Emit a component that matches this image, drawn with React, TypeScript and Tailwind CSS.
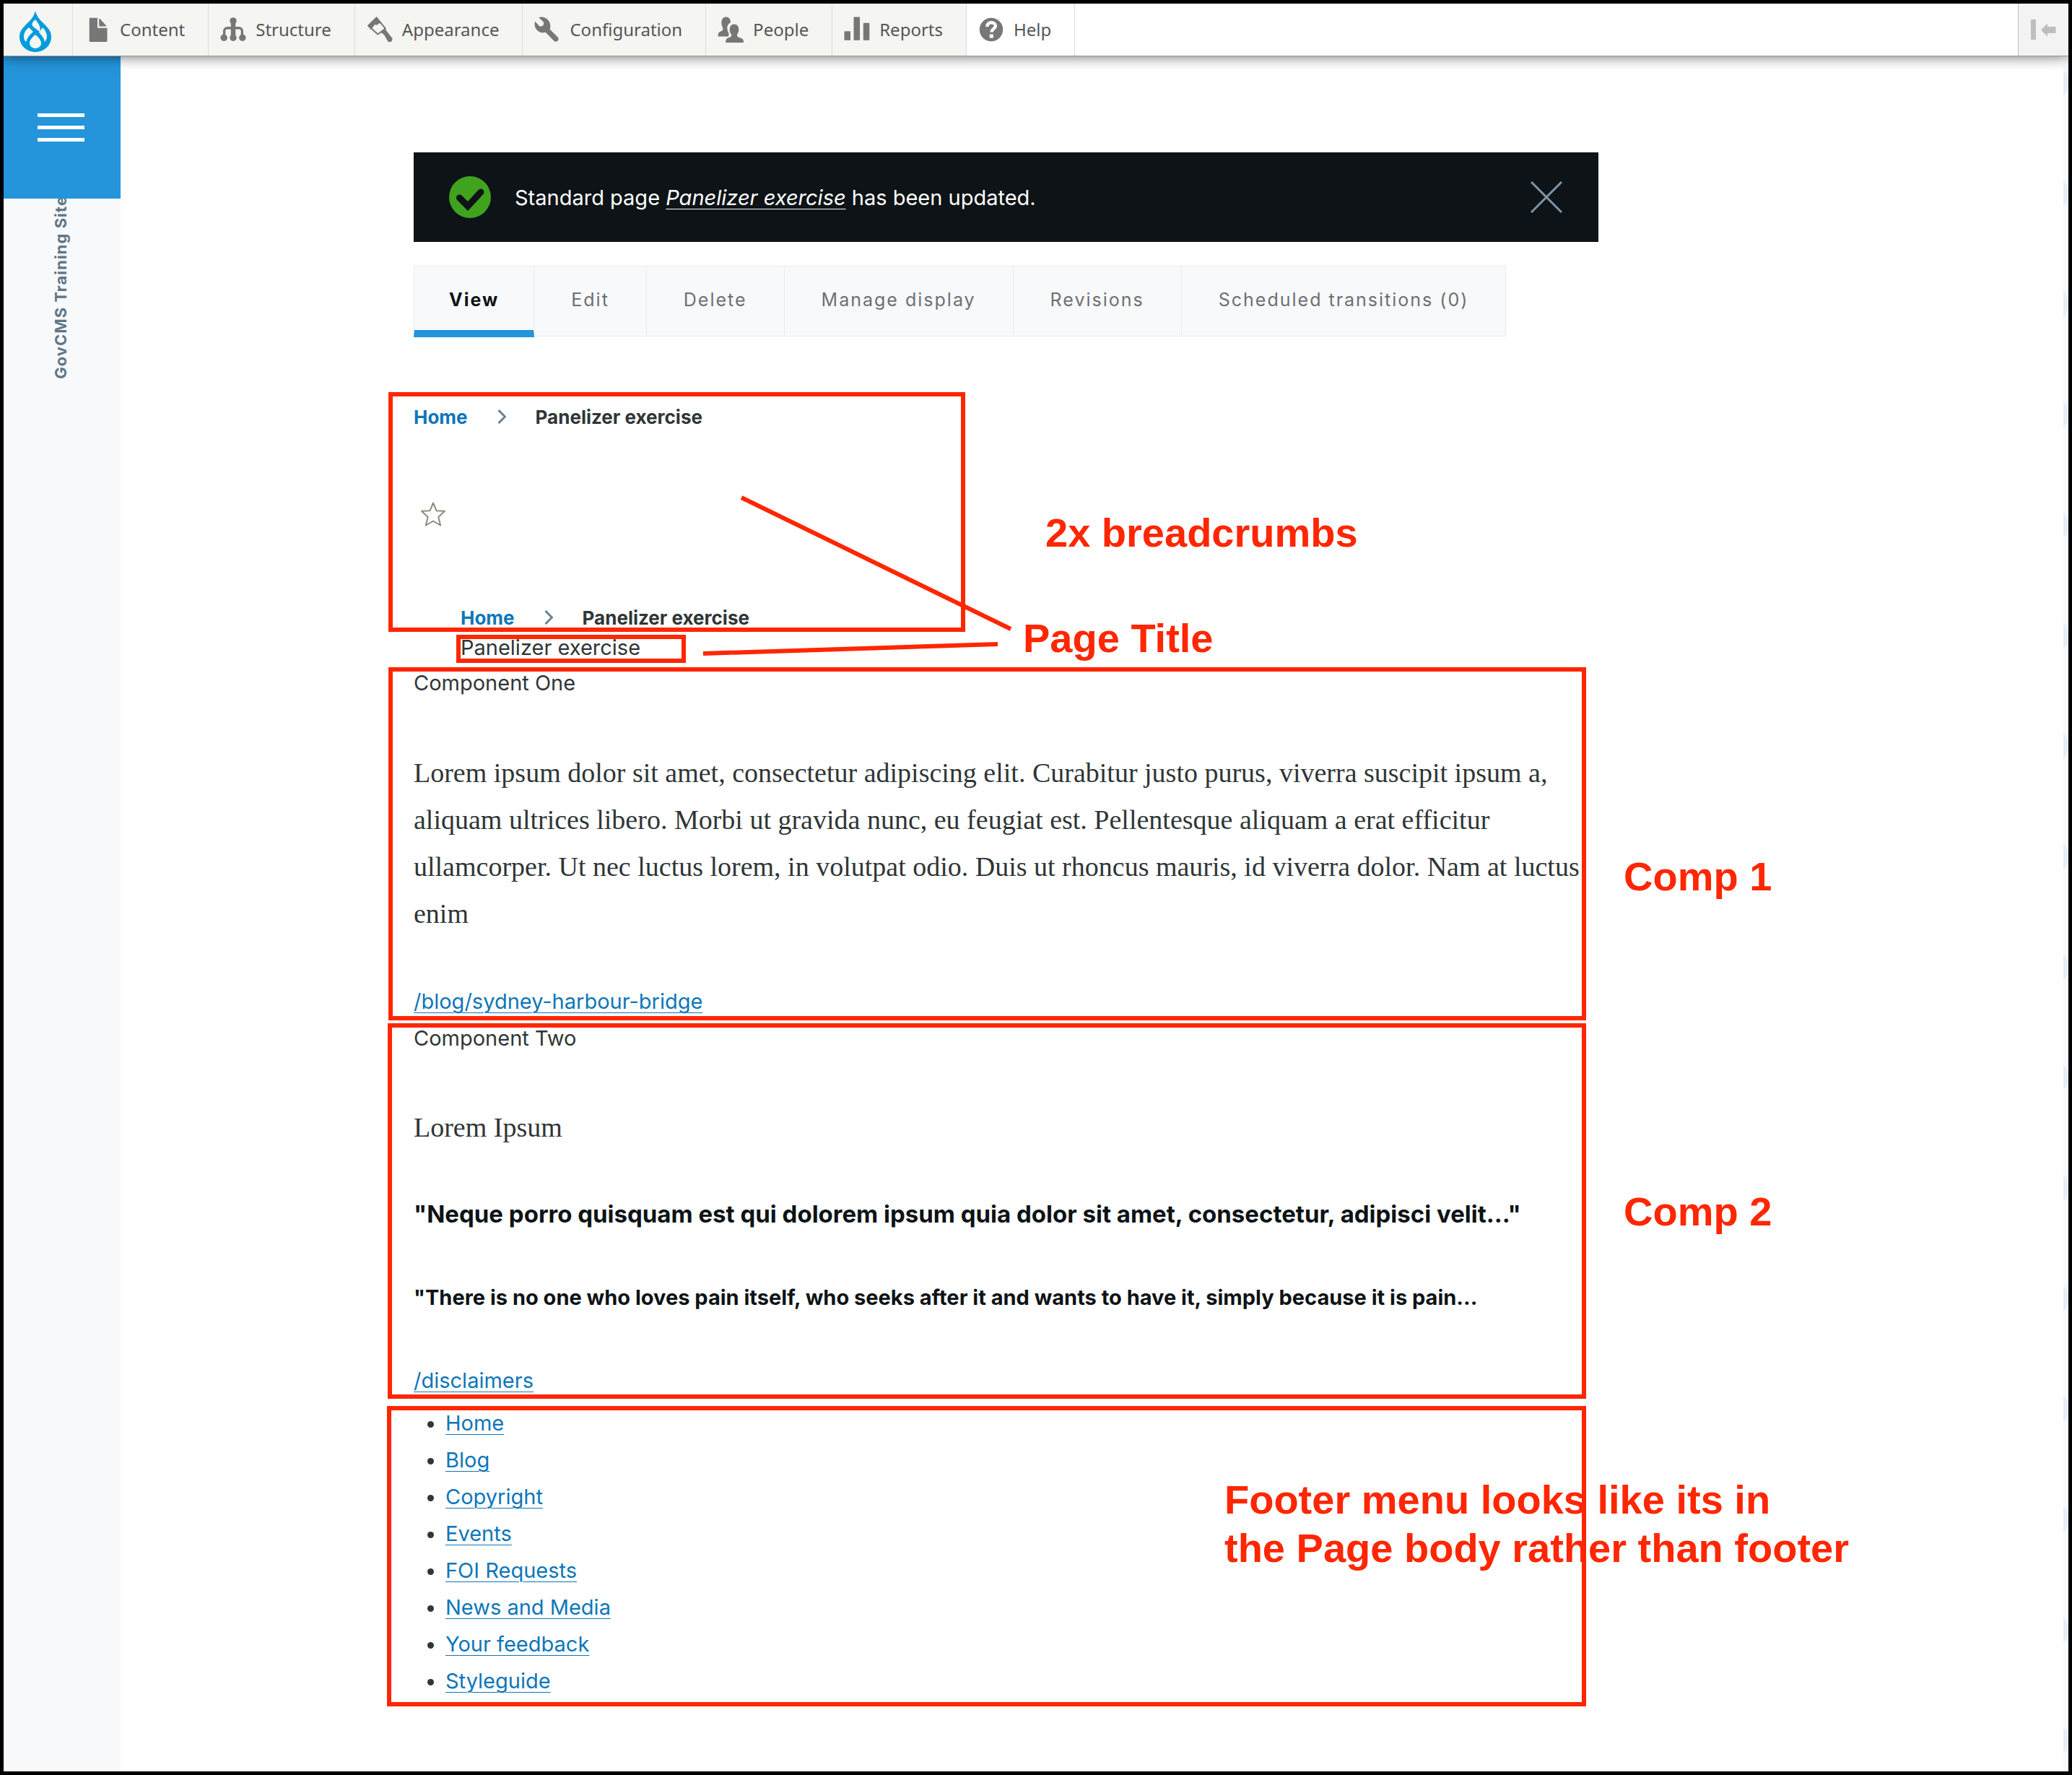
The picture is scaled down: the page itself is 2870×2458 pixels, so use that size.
import React from "react";

const toolbarItems = [
  { label: "Content", icon: "content" },
  { label: "Structure", icon: "structure" },
  { label: "Appearance", icon: "appearance" },
  { label: "Configuration", icon: "configuration" },
  { label: "People", icon: "people" },
  { label: "Reports", icon: "reports" },
  { label: "Help", icon: "help" },
];

const tabs = ["View", "Edit", "Delete", "Manage display", "Revisions", "Scheduled transitions (0)"];

const footerLinks = ["Home", "Blog", "Copyright", "Events", "FOI Requests", "News and Media", "Your feedback", "Styleguide"];

const linkClass = "text-[#0e76b8] underline decoration-1 underline-offset-[5px]";

function ToolbarIcon({ name }: { name: string }) {
  return (
    <svg viewBox="0 0 16 16" className="size-9 shrink-0 fill-[#777777]" aria-hidden="true">
      {name === "content" && (
        <>
          <path d="M13.3 6H9V1.3c0-.2.2-.3.4-.1L13.4 5.500c.2.200.100.500-.1.500z" />
          <path d="M8 1v6h6v8c0 .300-.2.500-.5.500h-10c-.3 0-.5-.2-.5-.5V1.300C3 1 3.200.800 3.500.800H8z" />
        </>
      )}
      {name === "structure" && (
        <>
          <ellipse cx="8" cy="2.600" rx="2.100" ry="2.100" />
          <path d="M7.300 4h1.400v8H7.300zM2.500 12V9c0-1.200.8-2 2-2h7c1.200 0 2 .8 2 2v3" fill="none" stroke="#777777" strokeWidth="1.500" />
          <circle cx="2.300" cy="13" r="2.100" />
          <circle cx="8" cy="13" r="2.100" />
          <circle cx="13.700" cy="13" r="2.100" />
        </>
      )}
      {name === "appearance" && (
        <>
          <path d="M.9 5.600L6 .6l5.500 6.800-4.700 3.500z" fill="none" stroke="#777777" strokeWidth=".9" strokeLinejoin="round" />
          <path d="M.5 5.500L6 .1l4.200 5.300-2.300-1.400-1.700 1.200-1.200-.3L2.600 8z" />
          <path d="M8.700 9.700l2.600-2 4.200 5.300c1.100 1.600-1.200 3.600-2.500 2.200l-2.300-4z" />
        </>
      )}
      {name === "configuration" && (
        <path d="M14.400 12.600L9.600 7.800c.7-2 .3-4.300-1.300-5.900C6.700.300 4.600-.100 2.800.500l3.100 3.100-.4 2-2 .5L.5 3C-.1 4.800.300 6.900 1.800 8.400c1.400 1.400 3.400 1.800 5.200 1.300l5.100 5.200c1.500 1.500 3.900-.7 2.300-2.300z" />
      )}
      {name === "people" && (
        <>
          <path d="M6.700 12.200H.300c0-2 .3-2.500 1.300-3 1.400-.6 1.700-1 1.700-1.700 0-.8-.9-1.600-.9-3.800C2.400 1.300 3.600.200 5.200.200S8 1.300 8 3.700C6.300 4.600 5.700 6 6 7.900c.1 1.200.8 2 .9 2.700z" />
          <path d="M5 16c0-1.700.2-2.400 1.400-2.900 1.700-.6 2.100-.9 2.100-1.700S7.400 10.100 7.400 8c0-2.100 1.200-3.300 2.800-3.300S13 5.900 13 8c0 2.100-1 2.600-1 3.400s.4 1.100 2.100 1.700c1.500.5 1.900 1.200 1.900 2.900z" />
        </>
      )}
      {name === "reports" && (
        <>
          <rect x=".2" y="9" width="3.800" height="5.600" rx=".4" />
          <rect x="6" y=".2" width="3.800" height="14.400" rx=".4" />
          <rect x="11.900" y="3.900" width="3.800" height="10.700" rx=".4" />
        </>
      )}
      {name === "help" && (
        <>
          <circle cx="8" cy="8" r="7.200" />
          <path d="M5.500 6.200C5.500 4.500 6.600 3.700 8 3.700s2.600.8 2.600 2.100c0 1.700-2.400 1.900-2.400 3.700" fill="none" stroke="#ffffff" strokeWidth="2" />
          <rect x="7" y="10.900" width="2.300" height="2.200" fill="#ffffff" />
        </>
      )}
    </svg>
  );
}

function Toolbar() {
  return (
    <header className="relative z-20 flex h-[73px] items-stretch border-b border-[#9a9a9a] bg-white shadow-[0_0_18px_rgba(0,0,0,0.6)]">
      <a href="#home" aria-label="Drupal home" className="flex w-24 items-center justify-center border-r border-[#dddddd] bg-[#f5f5f2] pt-1 pr-2">
        <svg viewBox="0 0 44 57" className="h-[57px] w-11" aria-hidden="true">
          <path d="M22 0C20 9 14 14 9 19 4 24 0 29 0 36c0 12 10 21 22 21s22-9 22-21c0-7-4-12-9-17-5-5-11-10-13-19z" fill="#009cde" />
          <path d="M22 12c-5 4-6 7-3 10l9 7c2-6-1-11-6-17zM13 23c-5 4-7 8-7 13 0 3 1 5 3 7 2-6 5-10 10-14zM32 23l-5 7c4 4 7 8 8 13 2-3 3-5 3-7 0-5-2-9-6-13zM22 33c-5 4-8 8-8 12 0 4 4 7 8 7s8-3 8-7c0-4-3-8-8-12z" fill="#f5f5f2" />
        </svg>
      </a>
      <nav className="flex" aria-label="Administration">
        {toolbarItems.map((item) => (
          <a
            key={item.label}
            href="#admin"
            className={`flex items-center gap-[13px] border-r border-[#dddddd] pr-8 pl-4 text-[24px] text-[#565656] ${item.label === "Help" ? "bg-white" : "bg-[#f5f5f2]"}`}
          >
            <ToolbarIcon name={item.icon} />
            {item.label}
          </a>
        ))}
      </nav>
      <button type="button" aria-label="Vertical orientation" className="ml-auto flex w-[70px] items-center justify-center border-l border-[#bfbfbf] bg-[#f3f3f3]">
        <svg viewBox="0 0 36 28" className="h-7 w-9 fill-[#bebebe]" aria-hidden="true">
          <rect width="7" height="28" rx="1" />
          <path d="M14 14.500L23 5.500v4.500h11.500v9H23v4.500z" />
        </svg>
      </button>
    </header>
  );
}

function Breadcrumb() {
  return (
    <nav aria-label="Breadcrumb" className="flex h-10 items-center text-[26px] font-bold text-[#2f3636]">
      <a href="#home" className="text-[#0e76b8]">Home</a>
      <svg viewBox="0 0 12 20" className="mx-[41px] h-5 w-3 fill-none stroke-[#6a7f92] stroke-3" aria-hidden="true">
        <path d="M1.500 1l9 9-9 9" />
      </svg>
      <span>Panelizer exercise</span>
    </nav>
  );
}

function Annotations() {
  const box = "absolute border-6 border-[#ff2600]";
  const note = "absolute text-[56px] leading-[67px] font-bold whitespace-nowrap";
  return (
    <div className="pointer-events-none absolute -inset-[5px] z-30 font-['Liberation_Sans',Arial,sans-serif] text-[#ff2600]">
      <div className={`${box} top-[543px] left-[538px] h-[332px] w-[799px]`} />
      <div className={`${box} top-[879px] left-[632px] h-[39px] w-[318px]`} />
      <div className={`${box} top-[924px] left-[538px] h-[489px] w-[1659px]`} />
      <div className={`${box} top-[1417px] left-[537px] h-[520px] w-[1660px]`} />
      <div className={`${box} top-[1947px] left-[536px] h-[416px] w-[1661px]`} />
      <svg viewBox="0 0 440 230" className="absolute top-[680px] left-[970px] h-[230px] w-[440px] stroke-[#ff2600] stroke-6" aria-hidden="true">
        <path d="M57 9L430 191M4 225L412 212" fill="none" />
      </svg>
      <p className={`${note} top-[704px] left-[1448px]`}>2x breadcrumbs</p>
      <p className={`${note} top-[850px] left-[1417px]`}>Page Title</p>
      <p className={`${note} top-[1180px] left-[2249px]`}>Comp 1</p>
      <p className={`${note} top-[1644px] left-[2249px]`}>Comp 2</p>
      <p className={`${note} top-[2043px] left-[1696px]`}>
        Footer menu looks like its in
        <br />
        the Page body rather than footer
      </p>
    </div>
  );
}

export default function App() {
  return (
    <div className="relative flex min-h-screen flex-col border-5 border-black bg-white font-['Noto_Sans','Open_Sans',sans-serif]">
      <Toolbar />
      <div className="flex flex-1 font-['Inter',sans-serif]">
        <aside className="flex w-[162px] flex-col items-center bg-[#f8f9fb]">
          <button type="button" aria-label="Open menu" className="z-10 flex h-[197px] w-full flex-col items-center justify-center gap-3 bg-[#2494db] pr-[3px]">
            <span className="h-[5px] w-[65px] bg-white" />
            <span className="h-[5px] w-[65px] bg-white" />
            <span className="h-[5px] w-[65px] bg-white" />
          </button>
          <p className="-mt-1 mr-1 rotate-180 text-[22px] font-bold tracking-[1px] text-[#5f7686] [writing-mode:vertical-rl]">GovCMS Training Site</p>
        </aside>
        <main className="mr-auto ml-[406px] w-full max-w-[1641px] pt-[133px] text-[29px] leading-[51px] text-[#2f3636]">
          <div role="status" className="flex h-[124px] items-center bg-[#0d1316] pr-[50px] pl-[49px] text-white">
            <svg viewBox="0 0 58 58" className="mr-[33px] size-[58px]" aria-hidden="true">
              <circle cx="29" cy="29" r="29" fill="#3fa31e" />
              <path d="M14.500 30L26 41.500 44 22" fill="none" stroke="#0d1316" strokeWidth="9" strokeLinecap="round" strokeLinejoin="miter" />
            </svg>
            <p>
              Standard page{" "}
              <a href="#page" className="italic underline decoration-1 underline-offset-[5px]">Panelizer exercise</a> has been updated.
            </p>
            <button type="button" aria-label="Close message" className="ml-auto">
              <svg viewBox="0 0 44 44" className="size-11 fill-none stroke-[#7e94a8] stroke-3" aria-hidden="true">
                <path d="M1 1l42 42M43 1L1 43" />
              </svg>
            </button>
          </div>
          <nav aria-label="Tabs" className="mt-[33px] flex h-[99px] w-fit items-start text-[25px] tracking-[2px] text-[#6c7073]">
            {tabs.map((tab, i) => (
              <a
                key={tab}
                href="#tab"
                className={
                  i === 0
                    ? "flex h-[99px] items-center border-x border-t border-b-10 border-[#e8ecef] border-b-[#2494db] bg-[#f8f9fb] px-12 pt-1 font-bold text-[#0d1316]"
                    : "flex h-[98px] items-center border-y border-r border-[#e8ecef] bg-[#f8f9fb] px-[51px] pb-1"
                }
              >
                {tab}
              </a>
            ))}
          </nav>
          <div className="mt-[90px]">
            <Breadcrumb />
          </div>
          <button type="button" aria-label="Add to shortcuts" className="mt-[98px] ml-[10px] block">
            <svg viewBox="0 0 34 34" className="size-[34px] fill-none stroke-[#8d8b7e] stroke-2" strokeLinejoin="round" aria-hidden="true">
              <path d="M17 1.500l4.600 10.800 11.400.500-8.700 8.200 2.800 11.500L17 26.500 6.900 32.500 9.700 21 1 12.800l11.400-.5z" />
            </svg>
          </button>
          <div className="mt-[106px] ml-[65px]">
            <Breadcrumb />
            <h1 className="-mt-1">Panelizer exercise</h1>
          </div>
          <section>
            <h2 className="-mt-[2px]">Component One</h2>
            <p className="mt-[67px] font-['Liberation_Serif',serif] text-[38px] leading-[65px]">
              Lorem ipsum dolor sit amet, consectetur adipiscing elit. Curabitur justo purus, viverra suscipit ipsum a, aliquam ultrices libero. Morbi ut gravida nunc, eu feugiat est. Pellentesque aliquam a erat efficitur ullamcorper. Ut nec luctus lorem, in volutpat odio. Duis ut rhoncus mauris, id viverra dolor. Nam at luctus enim
            </p>
            <p className="mt-[63px]">
              <a href="#bridge" className={linkClass}>/blog/sydney-harbour-bridge</a>
            </p>
          </section>
          <section>
            <h2>Component Two</h2>
            <p className="mt-[66px] font-['Liberation_Serif',serif] text-[38px] leading-[65px]">Lorem Ipsum</p>
            <h3 className="mt-[62px] text-[33px] font-bold whitespace-nowrap text-[#0d1316]">"Neque porro quisquam est qui dolorem ipsum quia dolor sit amet, consectetur, adipisci velit..."</h3>
            <h4 className="mt-[64px] text-[29px] font-bold whitespace-nowrap text-[#0d1316]">"There is no one who loves pain itself, who seeks after it and wants to have it, simply because it is pain...</h4>
            <p className="mt-[64px]">
              <a href="#disclaimers" className={linkClass}>/disclaimers</a>
            </p>
          </section>
          <ul className="mt-2 list-disc pl-[44px]">
            {footerLinks.map((label) => (
              <li key={label}>
                <a href="#footer" className={linkClass}>{label}</a>
              </li>
            ))}
          </ul>
        </main>
        <div className="w-[7px] shrink-0 bg-[#f8f9fb] bg-[radial-gradient(circle_at_-16px_37px,#e6eff8_24px,transparent_24px)] bg-size-[7px_153px]" />
      </div>
      <Annotations />
    </div>
  );
}
